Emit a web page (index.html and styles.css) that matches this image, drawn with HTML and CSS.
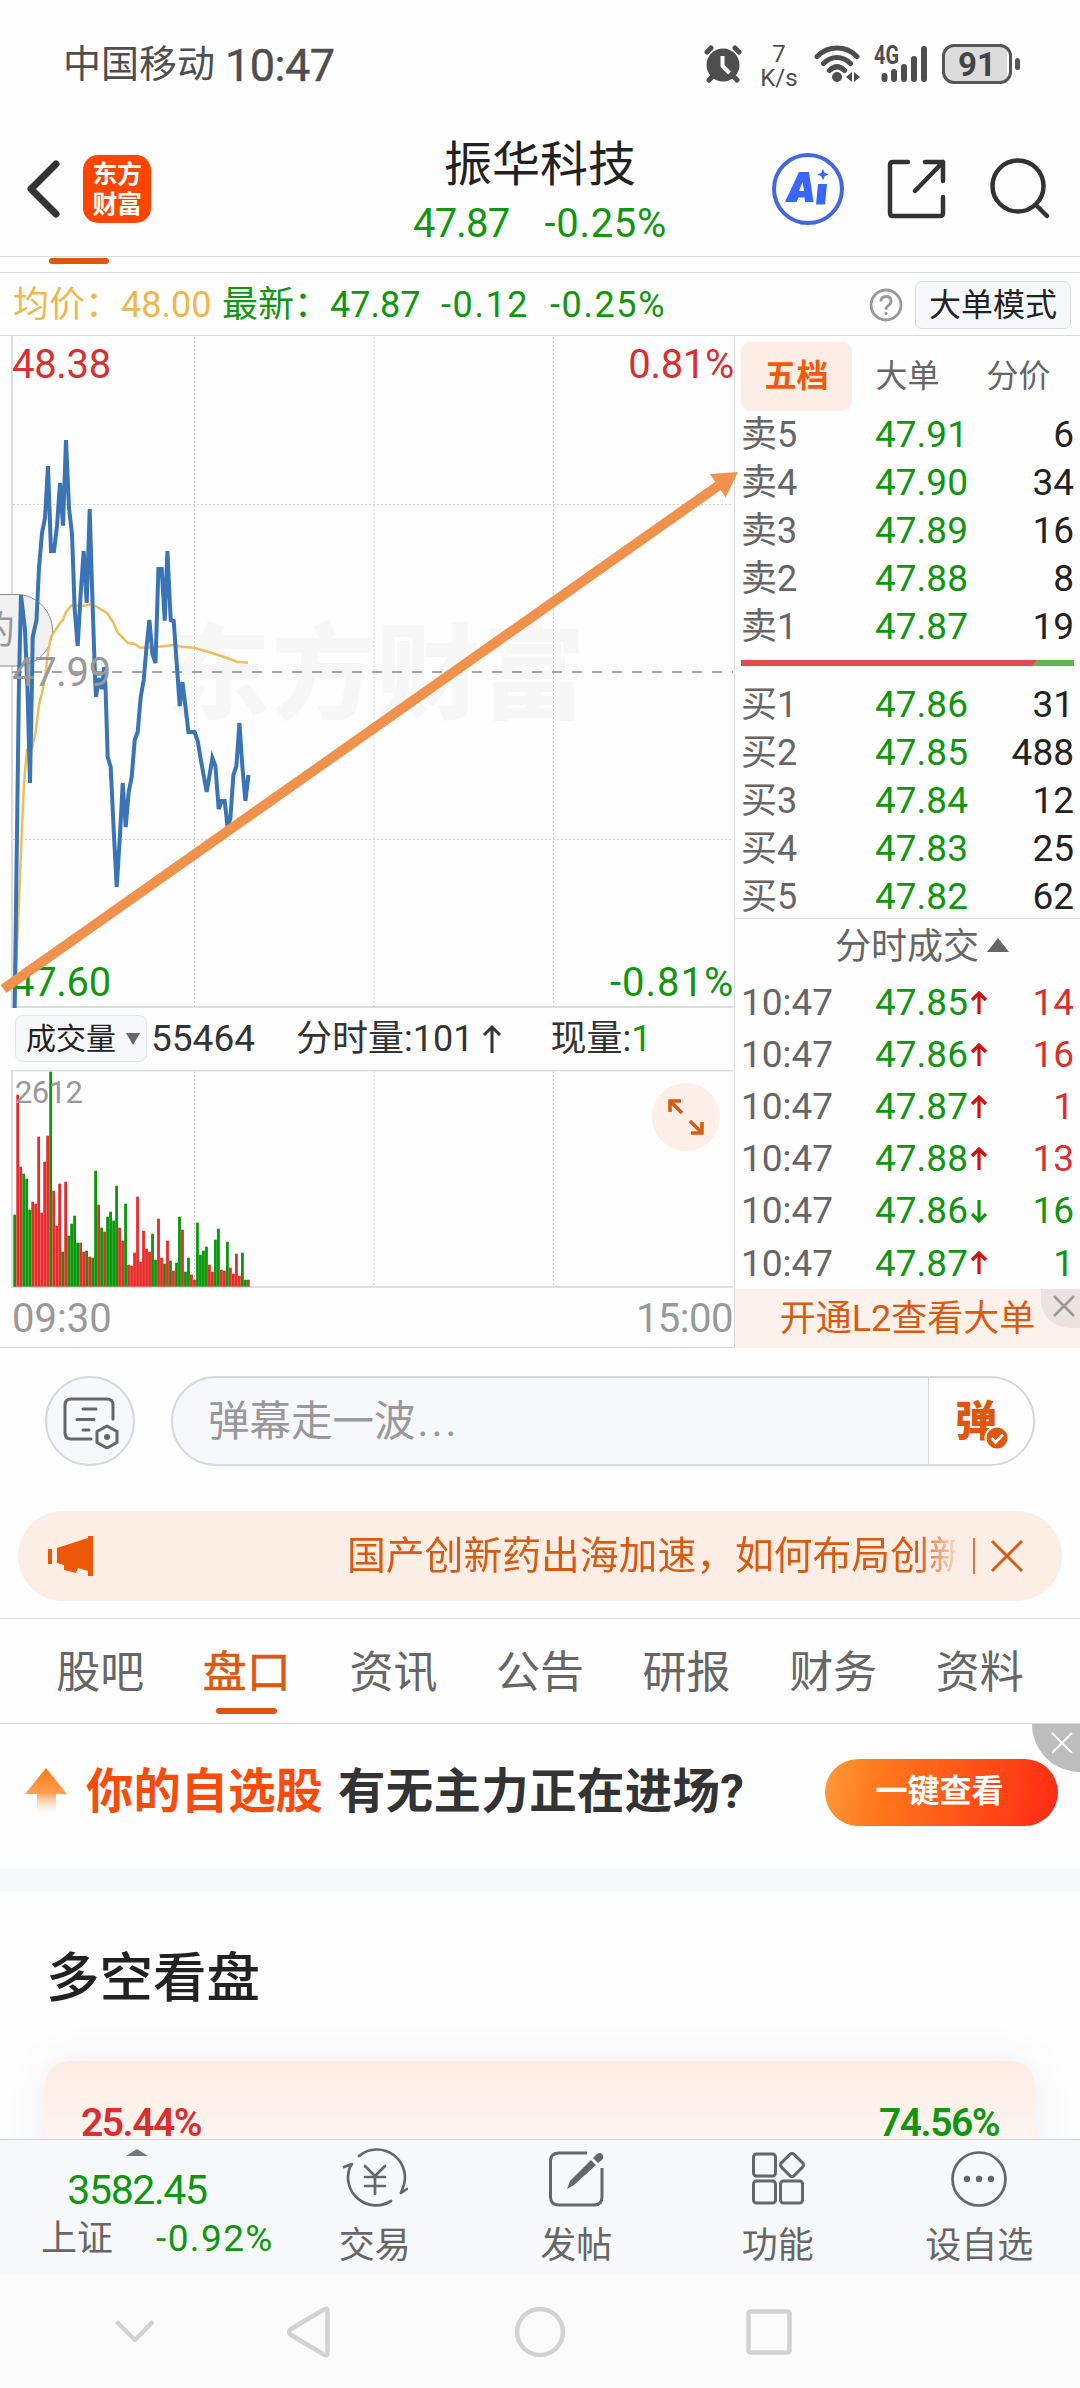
FILE: index.html
```html
<!DOCTYPE html>
<html lang="zh-CN">
<head>
<meta charset="utf-8">
<title>振华科技</title>
<link rel="stylesheet" href="styles.css">
</head>
<body>
<div class="status">
  <span class="carrier">中国移动</span><span class="clock">10:47</span>
  <svg class="alarm" width="38" height="38" viewBox="0 0 38 38"><g stroke="#4e4e4e" stroke-width="5" stroke-linecap="round"><path d="M3 7l4-4M35 7l-4-4M5 35l4-4M33 35l-4-4"/></g><circle cx="19" cy="20" r="16.5" fill="#4e4e4e"/><path d="M18.5 11v10l7 7" fill="none" stroke="#fff" stroke-width="4"/></svg>
  <span class="speed"><b>7</b><b>K/s</b></span>
  <svg class="wifi" width="47" height="38" viewBox="0 0 47 38" fill="none" stroke="#4e4e4e" stroke-width="5" stroke-linecap="round"><path d="M3 11.500C14 0 32 0 43 11.500M9.500 18.500c8-8 19-8 27 0M15.500 25.500c5-5 10-5 15 0"/><circle cx="23" cy="32" r="5" fill="#4e4e4e" stroke="none"/><path d="M38 27v10l-6-5zM40 27v10l6-5z" fill="#4e4e4e" stroke="none"/></svg>
  <svg class="signal" width="55" height="38" viewBox="0 0 55 38"><text x="0" y="19" textLength="25" lengthAdjust="spacingAndGlyphs">4G</text><g stroke="#4e4e4e" stroke-width="6" stroke-linecap="round"><path d="M10.500 31v3M20 27v7M30 22v12M40 14v20M50 4v30"/></g></svg>
  <span class="battery">91</span><i class="nub"></i>
</div>

<header class="head">
  <div class="head-left">
    <svg width="34" height="58" viewBox="0 0 34 58" fill="none" stroke="#333" stroke-width="7" stroke-linecap="round" stroke-linejoin="round"><path d="M30 4L5 29l25 25"/></svg>
    <div class="logo"><span>东方</span><span>财富</span></div>
  </div>
  <div class="head-title">
    <h1>振华科技</h1>
    <p><span>47.87</span><span>-0.25%</span></p>
  </div>
  <div class="head-icons">
    <svg width="72" height="74" viewBox="0 0 72 74"><circle cx="36" cy="37" r="34" fill="#fff" stroke="#4167e3" stroke-width="4"/><g fill="#3a66fb"><path d="M27 20h10l4.500 30h-8.500l-.5-4.500h-6l-2 4.500h-11.500zM30.500 30l-3.500 9h5z" fill-rule="evenodd"/><path d="M46 32h9l-2 20.500h-9zM51 17l1.700 3.800 4 1.700-4 1.700-1.700 4-1.700-4-4-1.700 4-1.700z"/></g></svg>
    <svg class="share" width="60" height="60" viewBox="0 0 60 60" fill="none" stroke="#333" stroke-width="4.500" stroke-linecap="round" stroke-linejoin="round"><path d="M21 3H6Q3 3 3 6V54Q3 57 6 57H53Q56 57 56 54V38M38 3H56V22M56 3L28 32"/></svg>
    <svg class="search" width="60" height="62" viewBox="0 0 60 62" fill="none" stroke="#333" stroke-width="4.500" stroke-linecap="round"><circle cx="28" cy="28" r="25.500"/><path d="M46 47l11 11"/></svg>
  </div>
</header>
<div class="sliver"><i></i></div>

<div class="quote">
  <span class="avg">均价：48.00</span>
  <span class="last">最新：47.87</span><span class="chg">-0.12</span><span class="pct">-0.25%</span>
  <svg width="34" height="34" viewBox="0 0 34 34" fill="none" stroke="#999" stroke-width="2.800"><circle cx="17" cy="17" r="15"/><path d="M12 13.500q0-5 5-5t5 4.500q0 3-3 4.700-2 1.200-2 4"/><circle cx="17" cy="25.500" r="1.200" fill="#999" stroke-width="1"/></svg>
  <span class="mode">大单模式</span>
</div>

<main class="market">
  <section class="charts">
    <svg class="price" width="735" height="673" viewBox="0 336 735 673">
      <text class="mark" x="167" y="711" textLength="418">东方财富</text>
      <path class="grid" d="M194.500 337V1006M374 337V1006M553.500 337V1006M13 504.500H733M13 839.500H733"/>
      <path d="M12 336V1007H733" fill="none" stroke="#dcdcdc" stroke-width="2"/>
      <path class="mid" d="M12 672H733"/>
      <g><path d="M-2 594.500H17C36 594.500 52.500 611 52.500 630.500S36 666 17 666H-2z" fill="#f1f1f1" stroke="#8a8a8a"/><text x="-23" y="643" font-size="38" fill="#999">的</text></g>
      <polyline fill="none" stroke="#efbd5c" stroke-width="2.500" points="15,1000 17.300,940 20,877 22,827 24,783 27,750 30,750 32,748 35.500,733 39,705 42,693 45,678 48,652 51,637 60,623 63,620 66,612 72,605 83,606 91,604 97,607 107,613 113,622 118,633 128,643 135,644 140,647.700 157,647 173,645 182,646.700 194,647.700 212,653 227,658 237,661.700 248,662.700"/>
      <polyline fill="none" stroke="#3a74b6" stroke-width="4" points="14.700,1008 19,680 21,595 25,630 27.500,690 30,783 32,680 32.700,637 36.500,620 39,568 42,533 45,518 48,466 51,551 54,551 57,526 60,483 63,525.700 66,440 69,508 72,534 74.700,610 77.700,646 80.700,593 83.700,551 86.700,603 89.700,509 92,586 95,677 96,697 98.700,678 101.700,689 104.300,667 105.500,687 107.700,757 110.700,767 113.700,830 116.700,887 120,835 122.700,783 125.700,827 128.700,792 131.700,777 134.700,740 137.700,732 140.700,697 143.700,680 146.700,645 149.400,620 152.400,654 155.500,663 158.400,569 161.700,569 164.700,620.600 167.400,551 170.700,620 173.700,621 176.700,663 179.700,706 182.400,682 185.400,706 188.400,732 194.700,732 197.700,741 200.700,759 206.700,792 212.400,758 215.400,766 218.700,809 221.700,801 224.700,801 227.700,828 230.400,818 233.400,775 236.400,766 239.400,723 242.400,767 245.400,800.700 248.500,775"/>
      <text class="lab up" x="12" y="378">48.38</text>
      <text class="lab up end" x="734" y="378">0.81%</text>
      <text class="lab flat" x="12" y="686">47.99</text>
      <text class="lab down" x="12" y="996">47.60</text>
      <text class="lab down" x="610" y="996" textLength="123">-0.81%</text>
      <g fill="#f0924c"><path d="M3.500 989L720 484.500" stroke="#f0924c" stroke-width="10"/><path d="M738 472L710 474 725.700 497.500z"/></g>
    </svg>
    <div class="vol-head">
      <span class="vol-btn">成交量<i></i></span><span class="vol-sum">55464</span><span class="vol-min">分时量:101</span><svg width="20" height="30" viewBox="0 0 20 30" fill="none" stroke="#333" stroke-width="3"><path d="M10 29V3M2 11l8-8 8 8"/></svg><span class="vol-now">现量:<em>1</em></span>
    </div>
    <div class="vol">
      <svg width="735" height="218" viewBox="0 1070 735 218">
        <path class="grid" d="M194.500 1071V1286M374 1071V1286M553.500 1071V1286"/>
        <path d="M12 1287V1070.500H733M11 1287H733" fill="none" stroke="#dfdfdf" stroke-width="2"/>
        <g id="bars"></g>
        <text x="15" y="1103" font-size="31" fill="#999" textLength="68">2612</text>
      </svg>
      <span class="expand"><svg width="36" height="36" viewBox="0 0 36 36" fill="none" stroke="#d95b12" stroke-width="3.500"><path d="M2 13V2H13M2 2L14 14M23 34H34V23M34 34L22 22"/></svg></span>
    </div>
    <div class="times"><span>09:30</span><span class="close">15:00</span></div>
  </section>

  <aside class="book">
    <nav class="book-tabs"><b>五档</b><span>大单</span><span>分价</span></nav>
    <div class="row"><span>卖5</span><em>47.91</em><i>6</i></div>
    <div class="row"><span>卖4</span><em>47.90</em><i>34</i></div>
    <div class="row"><span>卖3</span><em>47.89</em><i>16</i></div>
    <div class="row"><span>卖2</span><em>47.88</em><i>8</i></div>
    <div class="row"><span>卖1</span><em>47.87</em><i>19</i></div>
    <div class="ratio"></div>
    <div class="row"><span>买1</span><em>47.86</em><i>31</i></div>
    <div class="row"><span>买2</span><em>47.85</em><i>488</i></div>
    <div class="row"><span>买3</span><em>47.84</em><i>12</i></div>
    <div class="row"><span>买4</span><em>47.83</em><i>25</i></div>
    <div class="row"><span>买5</span><em>47.82</em><i>62</i></div>
    <div class="deal-head">分时成交<i></i></div>
    <div class="deals">
      <div class="deal buy"><span>10:47</span><em>47.85</em><svg viewBox="0 0 18 24"><path d="M9 23V2M2 9l7-7 7 7"/></svg><i>14</i></div>
      <div class="deal buy"><span>10:47</span><em>47.86</em><svg viewBox="0 0 18 24"><path d="M9 23V2M2 9l7-7 7 7"/></svg><i>16</i></div>
      <div class="deal buy"><span>10:47</span><em>47.87</em><svg viewBox="0 0 18 24"><path d="M9 23V2M2 9l7-7 7 7"/></svg><i>1</i></div>
      <div class="deal buy"><span>10:47</span><em>47.88</em><svg viewBox="0 0 18 24"><path d="M9 23V2M2 9l7-7 7 7"/></svg><i>13</i></div>
      <div class="deal sell"><span>10:47</span><em>47.86</em><svg class="dn" viewBox="0 0 18 24"><path d="M9 1V22M2 15l7 7 7-7"/></svg><i>16</i></div>
      <div class="deal sell"><span>10:47</span><em>47.87</em><svg viewBox="0 0 18 24"><path d="M9 23V2M2 9l7-7 7 7"/></svg><i>1</i></div>
    </div>
    <div class="l2">开通L2查看大单<span class="l2-x"><svg width="22" height="22" viewBox="0 0 22 22" stroke="#999" stroke-width="2.500"><path d="M1 1l20 20M21 1L1 21"/></svg></span></div>
  </aside>
</main>

<div class="chat">
  <span class="chat-set"><svg width="56" height="52" viewBox="0 0 56 52" fill="none" stroke="#666" stroke-width="3" stroke-linecap="round"><path d="M50 22V8Q50 2 44 2H8Q2 2 2 8V36Q2 42 8 42H28M20 12H33M14 22.500H31M20 33H26"/><path d="M44 29l10 5.500v11L44 51l-10-5.500v-11z" stroke-linejoin="round"/><circle cx="44" cy="40" r="1.500" fill="#666"/></svg></span>
  <div class="chat-box"><span class="ph">弹幕走一波<em>...</em></span><span class="dan">弹<svg width="26" height="26" viewBox="0 0 26 26"><circle cx="13" cy="13" r="11.500" fill="#e2560c" stroke="#fff" stroke-width="2"/><path d="M7.500 13l4 4.500 7.500-8" fill="none" stroke="#fff" stroke-width="2.800"/></svg></span></div>
</div>

<div class="notice">
  <svg width="46" height="40" viewBox="0 0 46 40" fill="#ec5708"><path d="M0 13h4v15H0zM9 12L40 2V0H45V40H40V35L30 32 28 37 16 34V29L9 27z"/></svg>
  <span class="notice-text">国产创新药出海加速，如何布局创新</span>
  <i></i>
  <svg class="nx" width="34" height="34" viewBox="0 0 34 34" stroke="#d95b12" stroke-width="3"><path d="M2 2l30 30M32 2L2 32"/></svg>
</div>

<nav class="tabs"><span>股吧</span><span class="on">盘口</span><span>资讯</span><span>公告</span><span>研报</span><span>财务</span><span>资料</span></nav>

<div class="ad">
  <svg width="42" height="50" viewBox="0 0 42 50"><defs><linearGradient id="rise" x1="0" y1="0" x2="0" y2="1"><stop offset="0" stop-color="#ff7a10"/><stop offset=".5" stop-color="#ff9e55"/><stop offset="1" stop-color="#fff" stop-opacity="0"/></linearGradient></defs><path d="M21 0L42 26H31V50H12V26H0z" fill="url(#rise)"/></svg>
  <span class="ad-a">你的自选股</span><span class="ad-b">有无主力正在进场?</span>
  <span class="ad-btn">一键查看</span>
  <span class="ad-x"><svg width="22" height="22" viewBox="0 0 22 22" stroke="#fff" stroke-width="2"><path d="M1 1l20 20M21 1L1 21"/></svg></span>
</div>

<section class="power">
  <h2>多空看盘</h2>
  <div class="card"><span>25.44%</span><span class="g">74.56%</span></div>
</section>

<footer class="dock">
  <div class="index"><i></i><b>3582.45</b><p><span>上证</span><em>-0.92%</em></p></div>
  <div class="item"><svg width="66" height="60" viewBox="0 0 66 60" fill="none" stroke="#666" stroke-width="2.700" stroke-linecap="round" stroke-linejoin="round"><path d="M17 8A28 28 0 0 1 60 42l-1 3 6-4M49 53A28 28 0 0 1 8 19l2-3-8 3"/><path d="M23 18l10 10 10-10M33 28v18M23 29H43M23 38H43"/></svg><span>交易</span></div>
  <div class="item"><svg width="66" height="60" viewBox="0 0 66 60" fill="none" stroke="#666" stroke-width="3"><path d="M44 5H16Q7.500 5 7.500 13V49Q7.500 57 16 57H51Q59 57 59 49V20"/><path d="M24 41l3-8L48 12l5 5L31 37zM50 10l4-4q3-2 5 0t1 5l-5 4z" fill="#666" stroke="none"/></svg><span>发帖</span></div>
  <div class="item"><svg width="66" height="60" viewBox="0 0 66 60" fill="none" stroke="#666" stroke-width="3"><rect x="8.500" y="6" width="22" height="22" rx="3"/><rect x="8.500" y="33" width="22" height="22" rx="3"/><rect x="35.500" y="33" width="22" height="22" rx="3"/><rect x="38" y="8" width="18" height="18" rx="3" transform="rotate(45 47 17)"/></svg><span>功能</span></div>
  <div class="item"><svg width="66" height="60" viewBox="0 0 66 60"><circle cx="33" cy="31" r="26.500" fill="none" stroke="#666" stroke-width="2.700"/><g fill="#666"><circle cx="21" cy="31" r="3.200"/><circle cx="33" cy="31" r="3.200"/><circle cx="45" cy="31" r="3.200"/></g></svg><span>设自选</span></div>
</footer>
<div class="sysnav">
  <svg width="1080" height="114" viewBox="0 2274 1080 114" fill="none" stroke="#d2d2d2" stroke-width="4.500" stroke-linecap="round" stroke-linejoin="round"><path d="M118 2322l17 17 16.500-17M327.500 2310V2352Q327.500 2356 323 2353L291 2334Q287 2331 291 2328L323 2309Q327.500 2306 327.500 2310z"/><circle cx="540" cy="2331" r="23"/><rect x="748.500" y="2310.500" width="41" height="41" rx="2"/></svg>
</div>
<script src="bars.js"></script>
</body>
</html>
```
FILE: bars.js
```js
// One entry per minute since the open: direction and bar height in px.
const minutes = "g72 r192 r120 g113 g108 g77 r85 r83 r150 r74 r125 r151 g215 r96 r61 r103 g35 r105 g51 g63 g71 g44 r44 r35 g36 r30 g29 g116 r82 g59 r55 g70 g75 g66 g101 r59 r46 g83 r22 r21 r34 r90 r25 r56 r38 r35 g53 g27 r68 r29 g23 r46 g26 r16 g24 g70 r57 g15 g29 r12 r7 g64 g32 g36 g40 r22 r15 g47 g58 r17 r16 g45 r19 r13 r33 r11 g34 g7 r7";
const group = document.getElementById("bars");
minutes.split(" ").forEach((m, i) => {
  const h = +m.slice(1);
  const r = document.createElementNS("http://www.w3.org/2000/svg", "rect");
  r.setAttribute("x", 13.3 + i * 2.996);
  r.setAttribute("y", 1286.7 - h);
  r.setAttribute("width", 2.8);
  r.setAttribute("height", h);
  r.setAttribute("fill", m[0] === "g" ? "#0a980a" : "#e82b2b");
  group.appendChild(r);
});
```
FILE: styles.css
```css
* { box-sizing: border-box; margin: 0; padding: 0; }
body { width: 1080px; height: 2388px; overflow: hidden; background: #fefefe; color: #222; font-family: Roboto, "Noto Sans CJK SC", sans-serif; font-size: 36px; line-height: 1; white-space: nowrap; }
i, em { font-style: normal; }
svg { display: block; flex: none; }

.status { height: 120px; padding: 8px 0 0 63px; display: flex; align-items: center; color: #4e4e4e; }
.carrier { font-size: 38px; width: 162px; }
.clock { font-size: 45px; width: 479px; padding-top: 3px; letter-spacing: -0.5px; -webkit-text-stroke: 0.5px #4e4e4e; }
.speed { width: 58px; margin-left: 8px; margin-right: 6px; padding-top: 4px; display: flex; flex-direction: column; align-items: center; }
.speed b { font-weight: 400; font-size: 24px; line-height: 24px; }
.signal { margin-left: 13px; overflow: visible; }
.signal text { font-size: 25px; font-weight: 700; fill: #4e4e4e; }
.battery { width: 70px; height: 40px; margin-left: 13px; border: 3px solid #555; border-radius: 12px; background: linear-gradient(90deg, #dcdcdc 62px, #fff 62px); font-size: 33px; font-weight: 700; line-height: 35px; text-align: center; color: #444; }
.nub { width: 5px; height: 12px; margin-left: 3px; border-radius: 3px; background: #555; }

.head { height: 136px; padding: 0 30px 0 26px; display: grid; grid-template-columns: 1fr auto 1fr; column-gap: 0; }
.head-left { display: flex; align-items: center; gap: 23px; padding-top: 2px; }
.logo { width: 68px; height: 68px; border-radius: 15px; background: #fd4500; color: #fff; font-size: 25px; font-weight: 700; display: flex; flex-direction: column; align-items: center; justify-content: center; gap: 5px; letter-spacing: -0.5px; }
.head-title { text-align: center; padding-top: 20px; padding-left: 4px; }
.head-title h1 { font-size: 48px; font-weight: 400; line-height: 50px; }
.head-title p { display: flex; gap: 35px; margin-top: 14px; font-size: 40px; line-height: 40px; color: #109610; }
.head-title p span:first-child { letter-spacing: -0.8px; }
.head-title p span:last-child { letter-spacing: 0.7px; }
.head-icons { display: flex; align-items: center; justify-content: flex-end; padding-top: 2px; }
.share { margin-left: 43px; }
.search { margin-left: 43px; }

.sliver { height: 17px; border-top: 1px solid #d8d9db; border-bottom: 1px solid #d8d9db; padding: 1px 0 0 49px; }
.sliver i { display: block; width: 60px; height: 6px; border-radius: 3px; background: #e0560a; }

.quote { height: 63px; padding: 2px 9px 0 13px; display: flex; align-items: center; border-bottom: 1px solid #d8d9db; color: #109610; }
.quote .avg { color: #efb84f; width: 209px; }
.quote .last { width: 219px; }
.quote .chg { width: 109px; letter-spacing: 1.6px; }
.quote .pct { width: 319px; letter-spacing: 1.6px; }
.quote .mode { width: 156px; height: 48px; margin-left: 12px; border: 1px solid #d9dce2; border-radius: 7px; background: #f7f8fb; color: #222; font-size: 32px; line-height: 46px; text-align: center; }

.market { height: 1012px; display: flex; border-bottom: 1px solid #d8d9db; }
.charts { width: 735px; border-right: 1px solid #d8d9db; }
.price { position: relative; z-index: 2; overflow: visible; }
.mark { font-size: 103px; font-weight: 900; fill: #f7f7f7; }
.grid { fill: none; stroke: #d4d4d4; stroke-dasharray: 2 2; }
.mid { stroke: #888; stroke-width: 1.6; stroke-dasharray: 10 10; }
.lab { font-size: 40px; letter-spacing: -0.3px; }
.up { fill: #d83030; }
.down { fill: #109610; }
.flat { fill: #999; }
.end { text-anchor: end; }
.vol-head { height: 61px; padding: 0 0 2px 15px; display: flex; align-items: center; color: #333; }
.vol-btn { width: 132px; height: 47px; display: flex; align-items: center; gap: 10px; padding-left: 10px; border: 1px solid #e1e4e8; border-radius: 8px; background: #f7f8fb; font-size: 30px; color: #222; }
.vol-btn i { border: 7px solid transparent; border-top: 12px solid #666; border-bottom: 0; }
.vol-sum { width: 149px; padding-left: 4px; font-size: 37px; }
.vol-now { margin-left: 48px; }
.vol-now em { color: #109610; }
.vol-head svg { margin-left: 9px; }
.vol { position: relative; height: 218px; }
.expand { position: absolute; left: 652px; top: 13px; width: 68px; height: 68px; border-radius: 50%; background: #fdefe7; display: grid; place-items: center; }
.times { height: 59px; padding: 2px 1px 0 12px; display: flex; justify-content: space-between; align-items: center; font-size: 40px; color: #999; }
.times .close { letter-spacing: -0.5px; }

.book { width: 345px; }
.book-tabs { height: 74px; padding: 6px 6px 2px; display: grid; grid-template-columns: repeat(3, 111px); font-size: 32px; text-align: center; line-height: 69px; color: #666; }
.book-tabs b { border-radius: 9px; background: #fdede5; color: #f1590b; }
.row { height: 48px; padding: 1px 6px 0 6px; display: grid; grid-template-columns: 134px 110px 1fr; align-items: center; }
.row span { color: #666; }
.row em { color: #109610; font-size: 37px; }
.row i { text-align: right; font-size: 37px; }
.ratio { height: 6px; margin: 10px 6px 14px; background: linear-gradient(135deg, #e24b4b 210px, #62b64e 210px); }
.deal-head { height: 57px; border-top: 1px solid #e2e2e2; position: relative; top: -2px; display: flex; align-items: center; justify-content: center; gap: 8px; padding-left: 32px; padding-right: 3px; color: #666; }
.deal-head i { border: 11px solid transparent; border-bottom: 14px solid #666; border-top: 0; margin-bottom: 5px; }
.deals { margin-top: -1px; }
.deal { height: 52.1px; padding: 1px 6px 0 6px; display: grid; grid-template-columns: 134px 95px 18px 1fr; align-items: center; font-size: 37px; }
.deal span { color: #666; }
.deal em { color: #109610; }
.deal svg { width: 18px; height: 24px; fill: none; stroke: #cf1010; stroke-width: 3.2; }
.deal svg.dn { stroke: #109610; }
.deal i { text-align: right; }
.buy i { color: #d83030; }
.sell i { color: #109610; }
.l2 { position: relative; height: 59px; line-height: 61px; text-align: center; background: #fdf1ec; color: #d95b12; }
.l2-x { position: absolute; top: 0; right: 0; width: 39px; height: 39px; border-bottom-left-radius: 28px; background: #ece3e0; padding: 6px 0 0 12px; }

.chat { height: 163px; padding: 28px 45px 0; display: flex; gap: 36px; }
.chat-set { width: 90px; height: 90px; border: 2px solid #d6d8dc; border-radius: 50%; background: #f7f8fb; display: grid; place-items: center; padding: 4px 0 0 2px; }
.chat-box { flex: 1; height: 90px; border: 2px solid #d6d8dc; border-radius: 45px; background: #f7f8fb; display: flex; overflow: hidden; line-height: 88px; }
.ph { width: 755px; padding-left: 35px; font-size: 41.500px; color: #999; }
.ph em { letter-spacing: 3px; margin-left: 2px; }
.dan { position: relative; flex: 1; padding-left: 26px; border-left: 1px solid #d6d8dc; background: #fefefe; font-size: 42px; font-weight: 900; color: #e2560c; }
.dan svg { position: absolute; left: 55px; top: 47px; }

.notice { height: 90px; margin: 0 18px; padding: 0 38px 0 30px; border-radius: 45px; background: #fceee5; display: flex; align-items: center; color: #d95b12; }
.notice-text { width: 608px; margin-left: 253px; overflow: hidden; font-size: 38.800px; line-height: 60px; -webkit-mask-image: linear-gradient(90deg, #000 570px, transparent 615px); }
.notice i { width: 2px; height: 36px; margin: 0 15px 0 18px; background: #d97a45; }

.tabs { height: 106px; margin-top: 17px; padding: 0 27px; border-top: 1px solid #d8d9db; border-bottom: 1px solid #d8d9db; display: grid; grid-template-columns: repeat(7, 1fr); text-align: center; font-size: 44px; line-height: 108px; color: #666; }
.tabs .on { color: #dc5a10; display: flex; flex-direction: column; align-items: center; height: 104px; -webkit-text-stroke: 0.6px #dc5a10; }
.tabs .on::after { content: ""; width: 61px; height: 6px; flex: none; margin-top: -19px; border-radius: 3px; background: #e0560a; }

.ad { position: relative; height: 144px; padding: 35px 22px 42px 25px; display: flex; align-items: center; font-size: 47.400px; font-weight: 700; }
.ad-a { margin-left: 19px; width: 252px; color: #f94c0c; }
.ad-b { color: #333; letter-spacing: 0.4px; }
.ad-btn { width: 233px; height: 67px; margin-left: auto; border-radius: 34px; background: linear-gradient(100deg, #ff9a3c, #ff7a1c 22%, #ff2a14); color: #fff; font-size: 32px; line-height: 65px; text-align: center; padding-right: 4px; }
.ad-x { position: absolute; top: 0; right: 0; width: 48px; height: 48px; border-bottom-left-radius: 48px; background: #bdbdbd; padding: 8px 0 0 19px; }

.power { height: 271px; border-top: 24px solid #f7f8fa; padding: 60px 45px 0; overflow: hidden; }
.power h2 { font-size: 53.500px; font-weight: 500; line-height: 54px; padding-left: 1px; }
.card { height: 240px; margin-top: 55px; padding: 43px 36px; border-radius: 24px; background: linear-gradient(#feece3, #fef6f1 80px); box-shadow: 0 0 44px rgba(0, 0, 0, .07); display: flex; justify-content: space-between; font-size: 39px; font-weight: 600; letter-spacing: -1.5px; color: #dc2e2e; }
.card .g { color: #109610; }

.dock { height: 136px; border-top: 1px solid #d0d2d6; background: #f7f8fa; display: grid; grid-template-columns: 274px repeat(4, 1fr); color: #666; }
.index { display: flex; flex-direction: column; align-items: center; padding-top: 9px; }
.index > i { border: 11px solid transparent; border-bottom: 7px solid #777; border-top: 0; }
.index b { font-weight: 400; font-size: 41px; line-height: 42px; margin-top: 13px; letter-spacing: -1.4px; color: #109610; }
.index p { width: 274px; display: flex; padding-left: 41px; margin-top: 9px; line-height: 38px; }
.index p span { width: 115px; }
.index em { color: #109610; font-size: 37px; letter-spacing: 1.4px; }
.item { display: flex; flex-direction: column; align-items: center; padding-top: 8px; }
.item span { margin-top: 20px; }
.sysnav { height: 114px; background: #fbfbfb; }
```
